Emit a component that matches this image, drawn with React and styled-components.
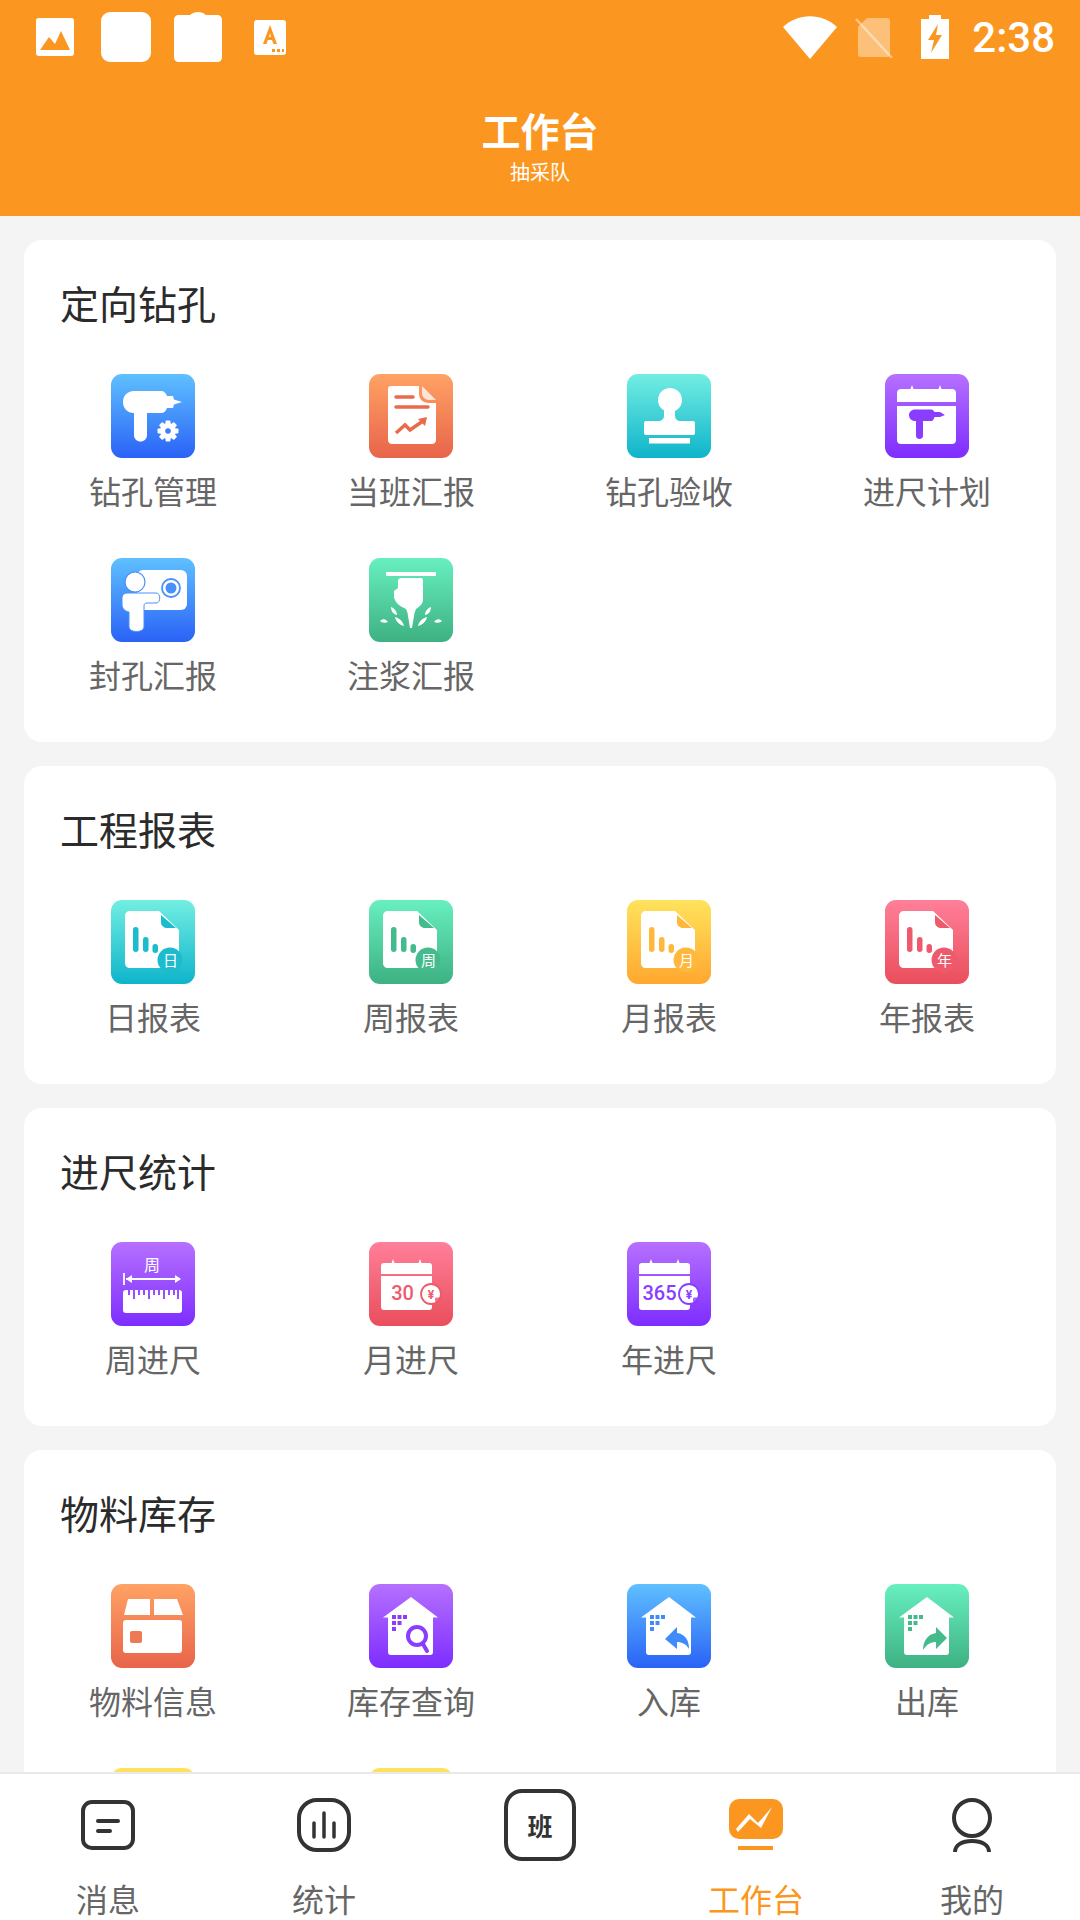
import React from 'react'
import styled, { createGlobalStyle } from 'styled-components'

const ORANGE = '#fb9720'
const CJK = '"Noto Sans CJK SC", "Noto Sans", sans-serif'

const tones = {
  blue: ['#5fc0ff', '#2a62f6', '#3f8bfb'],
  orange: ['#ffa264', '#e8644a', '#ea6a4c'],
  teal: ['#72eee2', '#0fb4cb', '#1cbcce'],
  purple: ['#b670ff', '#7d2dff', '#8a3dff'],
  green: ['#68efc0', '#3eb182', '#44bb8c'],
  yellow: ['#ffe35c', '#ffa72f', '#ffb83c'],
  pink: ['#ff7f99', '#ea4e5c', '#ee5a6c'],
}

const GlobalStyle = createGlobalStyle`
  html, body {
    margin: 0;
    padding: 0;
    background: #f4f4f5;
  }
  body {
    font-family: ${CJK};
  }
`

const Page = styled.div`
  width: 1080px;
  height: 1920px;
  display: flex;
  flex-direction: column;
  overflow: hidden;
`

const Header = styled.header`
  height: 216px;
  flex: none;
  background: ${ORANGE};
  color: #fff;
  display: flex;
  flex-direction: column;
  align-items: center;
`

const StatusBar = styled.div`
  width: 100%;
  height: 74px;
  display: flex;
  align-items: center;
  justify-content: space-between;
  box-sizing: border-box;
  padding: 0 25px 0 36px;
`

const StatusGroup = styled.div`
  display: flex;
  align-items: center;
`

const StatusSlot = styled.div`
  display: flex;
  margin-left: ${p => p.$left || 0}px;
`

const Clock = styled.span`
  font-family: Roboto, sans-serif;
  font-size: 42px;
  font-weight: 500;
  margin-left: 23px;
`

const Title = styled.div`
  margin-top: 35px;
  font-size: 39px;
  line-height: 40px;
  font-weight: 700;
`

const SubTitle = styled.div`
  margin-top: 11px;
  font-size: 20px;
  line-height: 24px;
`

const Content = styled.main`
  flex: 1;
  min-height: 0;
  overflow: hidden;
  padding: 24px 24px 0;
  display: flex;
  flex-direction: column;
  gap: 24px;
`

const Card = styled.section`
  flex: none;
  background: #fff;
  border-radius: 18px;
`

const CardTitle = styled.h2`
  margin: 0;
  padding: 38px 0 0 36px;
  font-size: 39px;
  line-height: 48px;
  font-weight: 400;
  color: #2b2b2b;
`

const Grid = styled.div`
  margin-top: 48px;
  display: grid;
  grid-template-columns: repeat(4, 258px);
`

const Item = styled.div`
  height: 184px;
  display: flex;
  flex-direction: column;
  align-items: center;
`

const Tile = styled.div`
  width: 84px;
  height: 84px;
  flex: none;
  border-radius: 11px;
  background: linear-gradient(180deg, ${p => tones[p.$tone][0]}, ${p => tones[p.$tone][1]});

  svg {
    display: block;
  }
`

const ItemLabel = styled.div`
  margin-top: 10px;
  font-size: 32px;
  line-height: 44px;
  color: #666;
`

const TabBar = styled.nav`
  flex: none;
  height: 148px;
  box-sizing: border-box;
  border-top: 2px solid #e9e9eb;
  background: #fff;
  display: grid;
  grid-template-columns: repeat(5, 216px);
`

const Tab = styled.div`
  display: flex;
  flex-direction: column;
  align-items: center;
  padding-top: 14px;
`

const TabIcon = styled.div`
  height: 74px;
  display: flex;
  align-items: center;
  justify-content: center;
`

const TabLabel = styled.div`
  margin-top: 14px;
  height: 44px;
  font-size: 32px;
  line-height: 44px;
  color: ${p => (p.$active ? ORANGE : '#666')};
`

const ShiftBadge = styled.div`
  width: 72px;
  height: 72px;
  box-sizing: border-box;
  border: 4px solid #333;
  border-radius: 18px;
  display: flex;
  align-items: center;
  justify-content: center;
  font-size: 25px;
  font-weight: 700;
  color: #333;
`

const Glyph = ({ children }) => (
  <svg width="84" height="84" viewBox="0 0 84 84">
    {children}
  </svg>
)

const drillPath =
  'M23 17H50C53 17 55 19 56 22H62L63 25.500L71 28L63 30.500L62 34H56C55 37 53 39 50 39H36V61C36 65 33 67.500 29.500 67.500C26 67.500 23 65 23 61V39C16 39 12 34 12 28C12 22 16 17 23 17Z'

const DrillIcon = () => (
  <Glyph>
    <path d={drillPath} fill="#fff" />
    <g transform="translate(57 57)">
      {[0, 45, 90, 135].map(a => (
        <rect key={a} x="-2.500" y="-10.500" width="5" height="21" rx="1" fill="#fff" transform={`rotate(${a})`} />
      ))}
      <circle r="8" fill="#fff" />
      <circle r="2.800" fill="#3c80fa" />
    </g>
  </Glyph>
)

const ReportIcon = () => (
  <Glyph>
    <path d="M22 12H50V20C50 25 54 29 60 29H67V66C67 68.500 65 70 63 70H23C21 70 19 68.500 19 66V15C19 13 20 12 22 12Z" fill="#fff" />
    <path d="M53 12L67 26H60C56 26 53 23 53 19Z" fill="#fff" opacity=".75" />
    <path d="M27 23H44M27 33H59" stroke="#e96a4c" strokeWidth="3.500" strokeLinecap="round" />
    <path d="M27 59L36 51L41 56L54 47" stroke="#e96a4c" strokeWidth="3.500" fill="none" />
    <path d="M49 45L58 43L56 52Z" fill="#e96a4c" />
  </Glyph>
)

const StampIcon = () => (
  <Glyph>
    <circle cx="43" cy="26" r="12" fill="#fff" />
    <path d="M37 32H48V42C48 45 50 46 52 47H33C35 46 37 45 37 42Z" fill="#fff" />
    <rect x="17" y="47" width="51" height="14" rx="2" fill="#fff" />
    <rect x="22" y="64" width="41" height="5.500" fill="#fff" />
  </Glyph>
)

const PlanIcon = () => (
  <Glyph>
    <path d="M16 15H25.500L27 11L28.500 15H53.500L55 11L56.500 15H67C69.500 15 71 16.500 71 19V28H12V19C12 16.500 13.500 15 16 15Z" fill="#fff" />
    <path d="M12 32H71V66C71 68.500 69.500 70 67 70H16C13.500 70 12 68.500 12 66Z" fill="#fff" />
    <path d="M30 35.500H46C48 35.500 49 37 49.500 38H55L60 41L55 43H49.500C49 45 48 47 46 47H38V62C38 66 31 66 31 62V47H30C26.500 47 24 44.500 24 41C24 38 26.500 35.500 30 35.500Z" fill="#8a3dff" />
  </Glyph>
)

const SealIcon = () => (
  <Glyph>
    <rect x="26" y="12" width="50" height="40" rx="6" fill="#fff" />
    <circle cx="60" cy="30" r="9" fill="#fff" stroke="#4a90fb" strokeWidth="1.800" />
    <circle cx="60" cy="30" r="5.500" fill="#4a90fb" />
    <circle cx="24" cy="24" r="10" fill="#fff" stroke="#4a90fb" strokeWidth="1.200" />
    <path d="M16 35H45C50 35 50 45 45 45H36C34 45 33 46 33 48V69C33 75 18 75 18 69V54C13 53 11 50 11 46V40C11 37 13 35 16 35Z" fill="#fff" stroke="#4a90fb" strokeWidth="1" />
  </Glyph>
)

const GroutIcon = () => (
  <Glyph>
    <rect x="17" y="14" width="50" height="4" fill="#fff" />
    <path d="M31 20H53C54 21 54 23 54 24V42C54 46 50 49 47 51L45.500 55L43 70H41L38.500 55L37 51C33 49 29 47 27 44L25 40V33L29 30V22Z" fill="#fff" />
    <path d="M22 49C25 50 28 53 28 57C24 56 22 53 22 49ZM62 49C59 50 56 53 56 57C60 56 62 53 62 49ZM26 59C30 60 34 63 35 68C31 67 27 64 26 59ZM58 59C54 60 50 63 49 68C53 67 57 64 58 59ZM11 63C14 60 17 61 19 64C16 65 13 65 11 63ZM73 63C70 60 67 61 65 64C68 65 71 65 73 63Z" fill="#fff" />
  </Glyph>
)

const SheetIcon = ({ tone, mark }) => {
  const c = tones[tone][2]
  return (
    <Glyph>
      <path d="M19 11H48L68 30V68H19C16 68 14 66 14 63V16C14 13 16 11 19 11Z" fill="#fff" />
      <path d="M50 15L65 28H56C52.500 28 50 25.500 50 22Z" fill={c} />
      <rect x="22" y="27" width="5.500" height="25" rx="2.700" fill={c} />
      <rect x="32" y="37" width="5.500" height="15" rx="2.700" fill={c} />
      <rect x="41.500" y="44" width="5.500" height="9" rx="2.700" fill={c} />
      <circle cx="59" cy="60" r="12.500" fill={c} />
      <text x="59.500" y="66" textAnchor="middle" fontSize="15" fill="#fff" fontFamily={CJK}>
        {mark}
      </text>
    </Glyph>
  )
}

const RulerIcon = () => (
  <Glyph>
    <text x="41" y="29" textAnchor="middle" fontSize="16" fill="#fff" fontFamily={CJK}>
      周
    </text>
    <path d="M13 31V43M15 37H69" stroke="#fff" strokeWidth="1.800" />
    <path d="M15 37L21 33V41ZM70 37L64 33V41Z" fill="#fff" />
    <path d="M12 51C12 49 13 48 15 48H68C70 48 71 49 71 51V68C71 70 70 71 68 71H15C13 71 12 70 12 68Z" fill="#fff" />
    {[18, 23, 28, 33, 38, 43, 48, 53, 58, 63, 67].map((x, i) => (
      <rect key={x} x={x - 1} y="47" width="2" height={i % 3 === 1 ? 10 : 6} fill="#9a4dff" />
    ))}
  </Glyph>
)

const MoneyCalendarIcon = ({ tone, days }) => {
  const c = tones[tone][2]
  return (
    <Glyph>
      <path d="M15 21H22.500L24 17L25.500 21H49.500L51 17L52.500 21H60C62 21 63 22 63 24V32H12V24C12 22 13 21 15 21Z" fill="#fff" />
      <path d="M12 34H63V65C63 67 62 68 60 68H15C13 68 12 67 12 65Z" fill="#fff" />
      <text x={days.length > 2 ? 32.500 : 33.500} y="57.500" textAnchor="middle" fontSize="20" fontWeight="500" fill={c} fontFamily="Roboto, sans-serif">
        {days}
      </text>
      <circle cx="62" cy="52" r="10" fill="#fff" stroke={c} strokeWidth="1.800" />
      <text x="62" y="56.500" textAnchor="middle" fontSize="12" fontWeight="700" fill={c} fontFamily="Roboto, sans-serif">
        ¥
      </text>
      <rect x="66" y="55.500" width="5.500" height="4.500" rx="1" fill={c} opacity=".8" />
    </Glyph>
  )
}

const BoxIcon = () => (
  <Glyph>
    <path d="M17 15H39V31H13ZM43 15H66L72 31H43Z" fill="#fff" />
    <rect x="12" y="36" width="59" height="33" rx="3" fill="#fff" />
    <rect x="19" y="47" width="12" height="12" rx="2" fill="#ee7a55" />
  </Glyph>
)

const HouseDots = ({ c }) => (
  <g fill={c}>
    {[[23, 31], [28.500, 31], [34, 31], [23, 37], [28.500, 37], [23, 43]].map(([x, y]) => (
      <rect key={`${x}-${y}`} x={x} y={y} width="4" height="4" />
    ))}
  </g>
)

const housePath = 'M42 13L69 33.500H64V68C64 70 63 71 61 71H22C20 71 19 70 19 68V33.500H14Z'

const HouseIcon = ({ tone, children }) => (
  <Glyph>
    <path d={housePath} fill="#fff" />
    <HouseDots c={tones[tone][2]} />
    {children}
  </Glyph>
)

const sections = [
  {
    title: '定向钻孔',
    items: [
      { label: '钻孔管理', tone: 'blue', icon: <DrillIcon /> },
      { label: '当班汇报', tone: 'orange', icon: <ReportIcon /> },
      { label: '钻孔验收', tone: 'teal', icon: <StampIcon /> },
      { label: '进尺计划', tone: 'purple', icon: <PlanIcon /> },
      { label: '封孔汇报', tone: 'blue', icon: <SealIcon /> },
      { label: '注浆汇报', tone: 'green', icon: <GroutIcon /> },
    ],
  },
  {
    title: '工程报表',
    items: [
      { label: '日报表', tone: 'teal', icon: <SheetIcon tone="teal" mark="日" /> },
      { label: '周报表', tone: 'green', icon: <SheetIcon tone="green" mark="周" /> },
      { label: '月报表', tone: 'yellow', icon: <SheetIcon tone="yellow" mark="月" /> },
      { label: '年报表', tone: 'pink', icon: <SheetIcon tone="pink" mark="年" /> },
    ],
  },
  {
    title: '进尺统计',
    items: [
      { label: '周进尺', tone: 'purple', icon: <RulerIcon /> },
      { label: '月进尺', tone: 'pink', icon: <MoneyCalendarIcon tone="pink" days="30" /> },
      { label: '年进尺', tone: 'purple', icon: <MoneyCalendarIcon tone="purple" days="365" /> },
    ],
  },
  {
    title: '物料库存',
    items: [
      { label: '物料信息', tone: 'orange', icon: <BoxIcon /> },
      {
        label: '库存查询',
        tone: 'purple',
        icon: (
          <HouseIcon tone="purple">
            <circle cx="48" cy="52" r="9" fill="none" stroke="#8a3dff" strokeWidth="4" />
            <path d="M54 60L58 67" stroke="#8a3dff" strokeWidth="4" strokeLinecap="round" />
          </HouseIcon>
        ),
      },
      {
        label: '入库',
        tone: 'blue',
        icon: (
          <HouseIcon tone="blue">
            <path d="M38 55L50 43V49C58 50 62 56 62 65C59 60 55 58 50 58V65Z" fill="#3f8bfb" />
          </HouseIcon>
        ),
      },
      {
        label: '出库',
        tone: 'green',
        icon: (
          <HouseIcon tone="green">
            <path d="M62 54L51 43V49C43 50 38 57 38 66C42 60 46 58 51 58V65Z" fill="#44bb8c" />
          </HouseIcon>
        ),
      },
      { tone: 'yellow' },
      { tone: 'yellow' },
    ],
  },
]

const MessageIcon = () => (
  <svg width="54" height="50" viewBox="0 0 54 50" fill="none" stroke="#333" strokeWidth="4">
    <path d="M2 11C2 6 6 2 11 2H43C48 2 52 6 52 11V39C52 44 48 48 43 48H11C6 48 2 44 2 40Z" />
    <path d="M17 21H37M17 31H29" strokeLinecap="round" />
  </svg>
)

const StatsIcon = () => (
  <svg width="54" height="54" viewBox="0 0 54 54" fill="none" stroke="#333" strokeWidth="4">
    <rect x="2" y="2" width="50" height="50" rx="18" />
    <path d="M27 15V39M17 25V39M37 25V39" strokeWidth="3.500" strokeLinecap="round" />
  </svg>
)

const BoardIcon = () => (
  <svg width="56" height="52" viewBox="0 0 56 52">
    <rect x="1" y="0" width="54" height="40" rx="10" fill={ORANGE} />
    <path d="M8 30L21 15L30 24L44 8L33 29L22 20L10 33Z" fill="#fff" />
    <rect x="10" y="47" width="35" height="4" fill={ORANGE} />
  </svg>
)

const PersonIcon = () => (
  <svg width="42" height="54" viewBox="0 0 42 54" fill="none" stroke="#333" strokeWidth="4">
    <circle cx="21" cy="20" r="18" />
    <path d="M4 54C4 47 11 43 21 43C31 43 38 47 38 54" />
  </svg>
)

const ImageStatus = () => (
  <svg width="38" height="38" viewBox="0 0 38 38">
    <rect width="38" height="38" rx="3" fill="#fff" />
    <path d="M4 32L13 19L19 26L25 13L34 32Z" fill={ORANGE} />
  </svg>
)

const SquareStatus = () => (
  <svg width="50" height="50" viewBox="0 0 50 50">
    <rect width="50" height="50" rx="9" fill="#fff" />
  </svg>
)

const ClipboardStatus = () => (
  <svg width="48" height="50" viewBox="0 0 48 50">
    <path d="M5 3H16C18 1 21 0 24 0C27 0 30 1 32 3H43C46 3 48 5 48 8V45C48 48 46 50 43 50H5C2 50 0 48 0 45V8C0 5 2 3 5 3Z" fill="#fff" />
  </svg>
)

const TextStatus = () => (
  <svg width="32" height="35" viewBox="0 0 32 35">
    <rect width="32" height="35" rx="3" fill="#fff" />
    <path d="M16 5L23 24H19.500L18 20H13.800L12.500 24H9ZM15 17H17L16 13Z" fill={ORANGE} />
    <path d="M18 29H21V32H18ZM23 29H26V32H23ZM28 29H30V32H28Z" fill={ORANGE} />
  </svg>
)

const WifiStatus = () => (
  <svg width="54" height="43" viewBox="0 0 54 43">
    <path d="M0 11C15 -3.500 39 -3.500 54 11L27 43Z" fill="#fff" />
  </svg>
)

const SimStatus = () => (
  <svg width="38" height="41" viewBox="0 0 38 41">
    <path d="M12 1H32C34 1 35 2 35 4V37C35 39 34 40 32 40H6C4 40 3 39 3 37V10Z" fill="#fff" opacity=".4" />
    <path d="M1 2L37 41" stroke="#fff" strokeWidth="2.500" opacity=".45" />
  </svg>
)

const BatteryStatus = () => (
  <svg width="28" height="44" viewBox="0 0 28 44">
    <path d="M8 0H20V4H28V44H0V4H8Z" fill="#fff" />
    <path d="M17 9L7 25H13L10 38L21 20H15Z" fill={ORANGE} />
  </svg>
)

export default function App() {
  return (
    <Page>
      <GlobalStyle />
      <Header>
        <StatusBar>
          <StatusGroup>
            <StatusSlot>
              <ImageStatus />
            </StatusSlot>
            <StatusSlot $left={27}>
              <SquareStatus />
            </StatusSlot>
            <StatusSlot $left={23}>
              <ClipboardStatus />
            </StatusSlot>
            <StatusSlot $left={32}>
              <TextStatus />
            </StatusSlot>
          </StatusGroup>
          <StatusGroup>
            <StatusSlot>
              <WifiStatus />
            </StatusSlot>
            <StatusSlot $left={18}>
              <SimStatus />
            </StatusSlot>
            <StatusSlot $left={28}>
              <BatteryStatus />
            </StatusSlot>
            <Clock>2:38</Clock>
          </StatusGroup>
        </StatusBar>
        <Title>工作台</Title>
        <SubTitle>抽采队</SubTitle>
      </Header>
      <Content>
        {sections.map(section => (
          <Card key={section.title}>
            <CardTitle>{section.title}</CardTitle>
            <Grid>
              {section.items.map((item, i) => (
                <Item key={i}>
                  <Tile $tone={item.tone}>{item.icon}</Tile>
                  {item.label && <ItemLabel>{item.label}</ItemLabel>}
                </Item>
              ))}
            </Grid>
          </Card>
        ))}
      </Content>
      <TabBar>
        <Tab>
          <TabIcon>
            <MessageIcon />
          </TabIcon>
          <TabLabel>消息</TabLabel>
        </Tab>
        <Tab>
          <TabIcon>
            <StatsIcon />
          </TabIcon>
          <TabLabel>统计</TabLabel>
        </Tab>
        <Tab>
          <TabIcon>
            <ShiftBadge>班</ShiftBadge>
          </TabIcon>
        </Tab>
        <Tab>
          <TabIcon>
            <BoardIcon />
          </TabIcon>
          <TabLabel $active>工作台</TabLabel>
        </Tab>
        <Tab>
          <TabIcon>
            <PersonIcon />
          </TabIcon>
          <TabLabel>我的</TabLabel>
        </Tab>
      </TabBar>
    </Page>
  )
}
